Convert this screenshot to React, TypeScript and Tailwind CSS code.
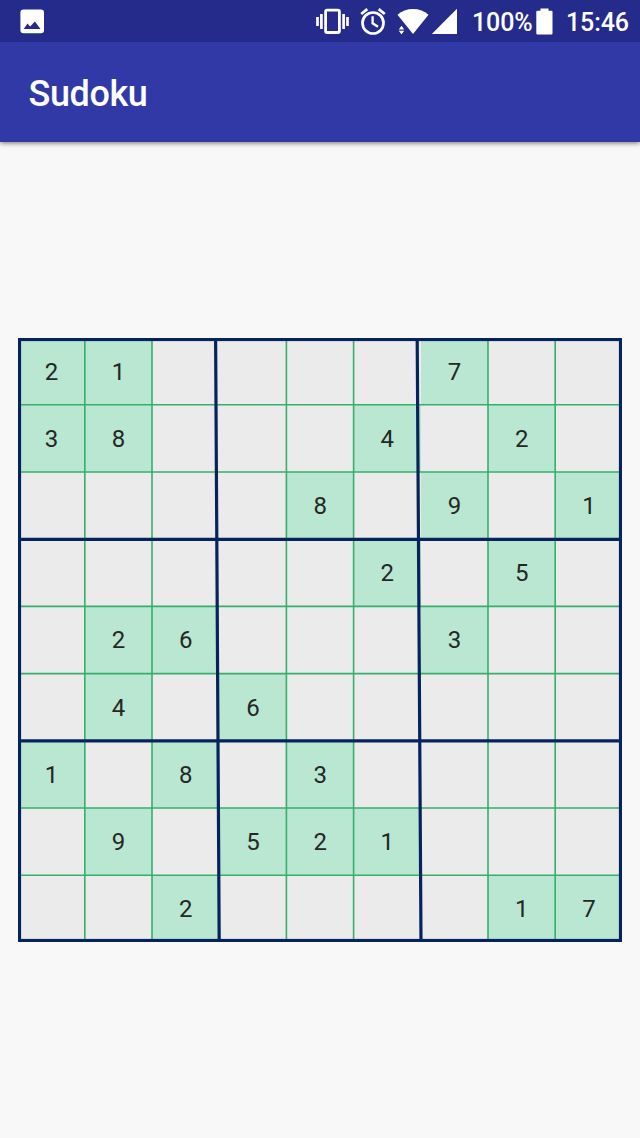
import React from 'react';

const PUZZLE = [
  '21....7..',
  '38...4.2.',
  '....8.9.1',
  '.....2.5.',
  '.26...3..',
  '.4.6.....',
  '1.8.3....',
  '.9.521...',
  '..2....17',
];

const CELL = 67.2;
const INSET = -0.4;
const at = (i: number) => INSET + CELL * i;
const MINOR = [1, 2, 4, 5, 7, 8];

function ImageIcon() {
  return (
    <svg className="ml-5 h-[25px] w-[25px]" viewBox="0 0 25 25">
      <rect x="0.4" y="0.5" width="23.6" height="23.8" rx="3" fill="#fff" />
      <path d="M3.7 20 7.5 14.6 10.2 17.6 14.9 12.6 20.5 20Z" fill="#252b8a" />
    </svg>
  );
}

function StatusIcons() {
  return (
    <svg className="h-[43px] w-[150px]" viewBox="312 0 150 43" fill="none" stroke="#fff">
      <rect x="325.6" y="10.2" width="13.8" height="22.3" rx="1.5" strokeWidth="2.8" />
      <path d="M321.4 14V29M343.6 14V29M317.5 17V26M347.5 17V26" strokeWidth="2.7" />
      <circle cx="373" cy="23" r="10.5" strokeWidth="2.7" />
      <path d="M372.6 16.3V23.3L378 26.8" strokeWidth="2.3" />
      <path d="M361.2 14 367.3 9.2M384.8 14 378.7 9.2" strokeWidth="2.8" />
      <path d="M397.5 14.8Q404 9 413 9T428.5 14.8L413 34Z" fill="#fff" stroke="none" />
      <path d="M398.8 29.5 401.5 25.8 404.2 29.5ZM398.8 30.8 401.5 34.4 404.2 30.8Z" fill="#fff" stroke="none" />
      <path d="M457 8.8V34H431.8Z" fill="#fff" stroke="none" />
    </svg>
  );
}

function BatteryIcon() {
  return (
    <svg className="h-[27px] w-[17px]" viewBox="0 0 17 27">
      <path d="M4.5 0.5H12.5V2.7H15.5Q16.5 2.7 16.5 3.7V25.3Q16.5 26.5 15.5 26.5H1.5Q0.3 26.5 0.3 25.3V3.7Q0.3 2.7 1.5 2.7H4.5Z" fill="#fff" />
    </svg>
  );
}

function GridLines() {
  return (
    <svg className="absolute inset-0 h-[604px] w-[604px]" viewBox="0 0 604 604" fill="none">
      <g stroke="#35b06c" strokeWidth="1.6">
        {MINOR.map((i) => (
          <path key={i} d={`M${at(i)} 0V604M0 ${at(i)}H604`} />
        ))}
      </g>
      <g stroke="#06245c" strokeWidth="3.2">
        <path d="M0 201.4H604M0 402.8H604" />
        <path d="M197.6 0 201.2 604M399.2 0 403 604" />
        <rect x="1.5" y="1.5" width="601" height="601" />
      </g>
    </svg>
  );
}

export default function App() {
  return (
    <div className="flex h-[1138px] w-[640px] flex-col overflow-hidden bg-[#f8f8f8] font-[Roboto,sans-serif]">
      <div className="relative z-10 flex h-[42px] items-center bg-[#252b8a] text-[25px] font-medium text-white">
        <ImageIcon />
        <div className="ml-auto flex items-center">
          <StatusIcons />
          <span className="ml-[10px] w-[62px] pt-1 tracking-[-0.1px] whitespace-nowrap">100%</span>
          <span className="ml-[2px]"><BatteryIcon /></span>
          <span className="ml-[13px] w-[74px] pt-1 tracking-[-0.1px] whitespace-nowrap">15:46</span>
        </div>
      </div>
      <header className="flex h-[100px] items-center bg-[#3039a6] pl-[28.5px] shadow-[0_1px_5px_rgba(0,0,0,0.55)]">
        <h1 className="pt-1 text-[36px] font-medium tracking-[-0.4px] text-white">Sudoku</h1>
      </header>
      <main className="relative mt-[196px] ml-[18px] h-[604px] w-[604px] overflow-hidden bg-[#ebebeb]">
        <div className="-mt-[0.4px] -ml-[0.4px] grid w-[604.8px] grid-cols-[repeat(9,67.2px)] grid-rows-[repeat(9,67.2px)]">
          {PUZZLE.flatMap((row, r) =>
            row.split('').map((value, c) => (
              <div
                key={`${r}-${c}`}
                className={`flex items-center justify-center pt-px pl-[0.4px] text-[24px] text-[#262626] ${value === '.' ? 'bg-[#ebebeb]' : 'bg-[#b9e7d1]'}`}
              >
                {value === '.' ? '' : value}
              </div>
            )),
          )}
        </div>
        <GridLines />
      </main>
    </div>
  );
}
